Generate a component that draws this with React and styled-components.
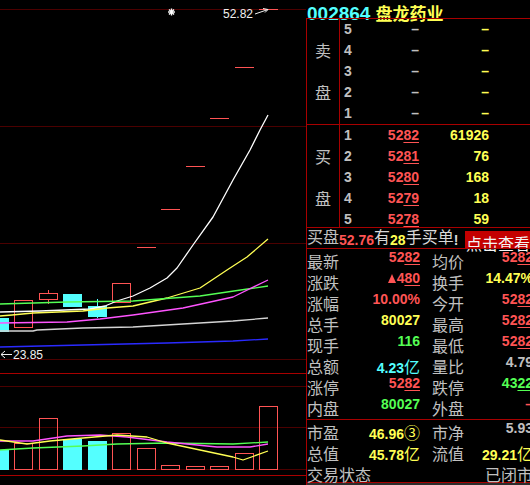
import React from "react";
import styled, { createGlobalStyle } from "styled-components";

const C = {
  red: "#ff5454",
  yellow: "#ffff54",
  cyan: "#54ffff",
  green: "#54ff54",
  gray: "#c0c0c0",
  white: "#ffffff",
  magenta: "#ff54ff",
  blue: "#2a2aff",
  line: "#a80000",
  dim: "#4c0000",
};

const Global = createGlobalStyle`
  html, body { margin: 0; padding: 0; background: #000; overflow: hidden; }
  #root { width: 530px; height: 485px; }
`;

const Screen = styled.div`
  width: 530px;
  height: 485px;
  display: flex;
  overflow: hidden;
  background: #000;
`;

const ChartArea = styled.div`
  width: 306px;
  height: 485px;
  flex-shrink: 0;
  svg { display: block; }
`;

const Panel = styled.div`
  width: 226px;
  flex-shrink: 0;
  display: flex;
  flex-direction: column;
`;

const Header = styled.div`
  height: 18px;
  display: flex;
  align-items: baseline;
  gap: 5px;
  padding-left: 1px;
  line-height: 18px;
  white-space: nowrap;
`;

const Code = styled.span`
  font: bold 19px "Liberation Sans", Arial, sans-serif;
  color: ${C.cyan};
`;

const Name = styled.span`
  font: bold 17px "Noto Sans CJK SC", sans-serif;
  color: ${C.yellow};
`;

const Body = styled.div`
  border-left: 1px solid ${C.line};
  display: flex;
  flex-direction: column;
`;

const Section = styled.div`
  border-top: 1px solid ${C.line};
  height: ${(p) => p.$h}px;
  flex-shrink: 0;
  ${(p) => (p.$last ? `border-bottom: 1px solid ${C.line};` : "")}
`;

const Book = styled(Section)`
  display: flex;
`;

const Side = styled.div`
  width: 32px;
  border-right: 1px solid ${C.line};
  display: grid;
  grid-template-rows: repeat(5, 21px);
  font: 16px "Noto Sans CJK SC", sans-serif;
  color: ${C.gray};
  line-height: 21px;
  text-align: center;
`;

const SideChar = styled.div`
  grid-row: ${(p) => p.$row};
`;

const Levels = styled.div`
  display: grid;
  grid-template-rows: repeat(5, 21px);
`;

const Level = styled.div`
  display: grid;
  grid-template-columns: 12px 63px 70px;
  padding-left: 4px;
  font: bold 14px "Liberation Sans", Arial, sans-serif;
  line-height: 21px;
  white-space: nowrap;
`;

const Cell = styled.span`
  color: ${(p) => p.$c || C.gray};
  text-align: ${(p) => (p.$right ? "right" : "left")};
`;

const Tail = styled.span`
  text-decoration: underline;
  text-underline-offset: 2px;
  text-decoration-thickness: 1px;
`;

const Notice = styled(Section)`
  display: flex;
  align-items: flex-end;
  white-space: nowrap;
  line-height: 20px;
`;

const Han = styled.span`
  font: 16px "Noto Sans CJK SC", sans-serif;
  color: ${(p) => p.$c || C.gray};
`;

const Num = styled.span`
  font: bold 14px "Liberation Sans", Arial, sans-serif;
  color: ${(p) => p.$c || C.gray};
`;

const LinkButton = styled.span`
  margin-left: auto;
  width: 66px;
  height: 17px;
  line-height: 17px;
  padding-left: 1px;
  background: #c40000;
  color: #f4f4f4;
  font: 16px "Noto Sans CJK SC", sans-serif;
`;

const StatGrid = styled(Section)`
  display: grid;
  grid-auto-rows: 21px;
  align-content: start;
`;

const StatRow = styled.div`
  display: grid;
  grid-template-columns: 40px 73px 52px 61px;
  line-height: 21px;
  white-space: nowrap;
`;

const Label = styled.span`
  font: 16px "Noto Sans CJK SC", sans-serif;
  color: ${C.gray};
  padding-left: ${(p) => (p.$second ? 12 : 0)}px;
`;

const Value = styled.span`
  font: bold 14px "Liberation Sans", Arial, sans-serif;
  color: ${(p) => p.$c};
  text-align: right;
`;

const StatusRow = styled.div`
  display: flex;
  justify-content: space-between;
  line-height: 21px;
  white-space: nowrap;
`;

const Up = styled.span`
  display: inline-block;
  width: 0;
  height: 0;
  border-left: 4px solid transparent;
  border-right: 4px solid transparent;
  border-bottom: 9px solid ${C.red};
  margin-right: 1px;
`;

const Footer = styled.div`
  height: 2px;
  background: #2c2c2c;
`;

const Price = ({ v }) => (
  <>
    {v.slice(0, -2)}
    <Tail>{v.slice(-2)}</Tail>
  </>
);

const DASH = "\u2013";

const sell = [5, 4, 3, 2, 1];
const buy = [
  [1, "5282", "61926"],
  [2, "5281", "76"],
  [3, "5280", "168"],
  [4, "5279", "18"],
  [5, "5278", "59"],
];

const stats1 = [
  ["最新", <Price v="5282" />, C.red, "均价", <Price v="5282" />, C.red],
  ["涨跌", <><Up /><Price v="480" /></>, C.red, "换手", "14.47%", C.yellow],
  ["涨幅", "10.00%", C.red, "今开", <Price v="5282" />, C.red],
  ["总手", "80027", C.yellow, "最高", <Price v="5282" />, C.red],
  ["现手", "116", C.green, "最低", <Price v="5282" />, C.red],
  ["总额", <>4.23<Han $c={C.cyan}>亿</Han></>, C.cyan, "量比", "4.79", C.gray],
  ["涨停", <Price v="5282" />, C.red, "跌停", <Price v="4322" />, C.green],
  ["内盘", "80027", C.green, "外盘", DASH, C.red],
];

const stats2 = [
  ["市盈", <>46.96<Han $c={C.yellow}>③</Han></>, C.yellow, "市净", "5.93", C.gray],
  ["总值", <>45.78<Han $c={C.yellow}>亿</Han></>, C.yellow, "流值", <>29.21<Han $c={C.yellow}>亿</Han></>, C.yellow],
];

/* ---------- chart drawing ---------- */
const STEP = 24.5;
const bodyLeft = (i) => Math.round(14 + STEP * (i - 1));

const candles = [
  { i: 0, k: "down", t: 318, b: 331 },
  { i: 1, k: "up", t: 300, b: 327 },
  { i: 2, k: "up", t: 293, b: 299, hi: 290, lo: 304 },
  { i: 3, k: "down", t: 294, b: 306 },
  { i: 4, k: "down", t: 306, b: 316, hi: 299, lo: 318 },
  { i: 5, k: "up", t: 283, b: 302 },
  { i: 6, k: "flat", t: 247 },
  { i: 7, k: "flat", t: 209 },
  { i: 8, k: "flat", t: 166 },
  { i: 9, k: "flat", t: 118 },
  { i: 10, k: "flat", t: 67 },
  { i: 11, k: "flat", t: 9 },
];

const vols = [
  { i: 0, k: "down", t: 450 },
  { i: 1, k: "up", t: 443 },
  { i: 2, k: "up", t: 418 },
  { i: 3, k: "down", t: 439 },
  { i: 4, k: "down", t: 441 },
  { i: 5, k: "up", t: 433 },
  { i: 6, k: "up", t: 448 },
  { i: 7, k: "up", t: 465 },
  { i: 8, k: "up", t: 466 },
  { i: 9, k: "up", t: 466 },
  { i: 10, k: "up", t: 453 },
  { i: 11, k: "up", t: 406 },
];

const maLines = [
  { c: C.white, p: [[0,312],[40,311],[90,309],[105,306],[117,301],[133,296],[150,288],[167,278],[177,268],[193,245],[213,217],[233,180],[250,150],[260,130],[268,115]] },
  { c: C.yellow, p: [[0,316],[12,315],[33,313],[83,311],[107,308],[133,306],[167,298],[200,288],[227,270],[247,257],[268,239]] },
  { c: C.green, p: [[0,304],[67,302],[133,301],[200,296],[268,286]] },
  { c: C.magenta, p: [[0,323],[67,322],[100,319],[133,315],[183,308],[233,297],[268,280]] },
  { c: "#d4d4d4", p: [[0,331],[33,331],[37,330],[83,328],[133,327],[183,324],[233,321],[268,318]] },
  { c: C.blue, p: [[0,347],[83,345],[167,343],[233,341],[268,339]] },
];

const volLines = [
  { c: C.green, p: [[0,450],[33,448],[83,446],[117,444],[167,443],[233,444],[268,442]] },
  { c: C.magenta, p: [[0,441],[33,441],[67,436],[100,435],[127,437],[167,442],[217,447],[250,447],[268,444]] },
  { c: C.yellow, p: [[0,440],[27,444],[50,441],[83,438],[117,435],[147,437],[167,443],[200,450],[233,457],[243,460],[268,451]] },
];

const grid = [
  [9, C.dim], [126, C.dim], [243, C.dim], [359, C.dim], [373, C.line],
  [386, C.dim], [427, C.dim], [469, C.dim], [475, C.line],
];

const pts = (p) => p.map(([x, y]) => `${x},${y}`).join(" ");

function Chart() {
  return (
    <svg width="306" height="485" viewBox="0 0 306 485">
      <g shapeRendering="crispEdges">
        {grid.map(([y, c]) => (
          <line key={y} x1="0" x2="306" y1={y + 0.5} y2={y + 0.5} stroke={c} strokeWidth="1" />
        ))}
        {candles.map((d) => {
          const x = bodyLeft(d.i);
          const cx = x + 9.5;
          if (d.k === "flat")
            return <line key={d.i} x1={x} x2={x + 19} y1={d.t + 0.5} y2={d.t + 0.5} stroke={C.red} />;
          const col = d.k === "up" ? C.red : C.cyan;
          return (
            <g key={d.i}>
              {d.hi && <line x1={cx} x2={cx} y1={d.hi} y2={d.t} stroke={col} />}
              {d.lo && <line x1={cx} x2={cx} y1={d.b} y2={d.lo} stroke={col} />}
              {d.k === "up" ? (
                <rect x={x + 0.5} y={d.t + 0.5} width="18" height={d.b - d.t} fill="none" stroke={col} />
              ) : (
                <rect x={x} y={d.t} width="19" height={d.b - d.t + 1} fill={col} />
              )}
            </g>
          );
        })}
        {vols.map((d) => {
          const x = bodyLeft(d.i);
          return d.k === "up" ? (
            <rect key={d.i} x={x + 0.5} y={d.t + 0.5} width="18" height={469 - d.t} fill="none" stroke={C.red} />
          ) : (
            <rect key={d.i} x={x} y={d.t} width="19" height={470 - d.t} fill={C.cyan} />
          );
        })}
      </g>
      <g fill="none" strokeWidth="1.3" strokeLinejoin="round">
        {maLines.map((l, k) => (
          <polyline key={k} points={pts(l.p)} stroke={l.c} />
        ))}
        {volLines.map((l, k) => (
          <polyline key={k} points={pts(l.p)} stroke={l.c} />
        ))}
      </g>
      <g stroke="#fff" strokeWidth="1.4">
        <line x1="168" x2="175" y1="12" y2="12" />
        <line x1="171.5" x2="171.5" y1="8.5" y2="15.5" />
        <line x1="169" x2="174" y1="9.5" y2="14.5" />
        <line x1="169" x2="174" y1="14.5" y2="9.5" />
      </g>
      <text x="223" y="17.5" fill="#f0f0f0" fontFamily="Liberation Sans, Arial, sans-serif" fontSize="12">52.82</text>
      <g stroke="#f0f0f0" strokeWidth="1" fill="none">
        <line x1="255" y1="14" x2="268" y2="9.5" />
        <polyline points="263,8.5 268,9.5 265,12.5" />
        <line x1="1" y1="354.5" x2="12" y2="354.5" />
        <polyline points="5,351 1,354.5 5,358" />
      </g>
      <text x="13" y="358.5" fill="#f0f0f0" fontFamily="Liberation Sans, Arial, sans-serif" fontSize="12">23.85</text>
    </svg>
  );
}

export default function App() {
  return (
    <>
      <Global />
      <Screen>
        <ChartArea>
          <Chart />
        </ChartArea>
        <Panel>
          <Header>
            <Code>002864</Code>
            <Name>盘龙药业</Name>
          </Header>
          <Body>
            <Book $h={105}>
              <Side>
                <SideChar $row={2}>卖</SideChar>
                <SideChar $row={4}>盘</SideChar>
              </Side>
              <Levels>
                {sell.map((n) => (
                  <Level key={n}>
                    <Cell>{n}</Cell>
                    <Cell $right>{DASH}</Cell>
                    <Cell $right $c={C.yellow}>{DASH}</Cell>
                  </Level>
                ))}
              </Levels>
            </Book>
            <Book $h={102}>
              <Side>
                <SideChar $row={2}>买</SideChar>
                <SideChar $row={4}>盘</SideChar>
              </Side>
              <Levels>
                {buy.map(([n, p, v]) => (
                  <Level key={n}>
                    <Cell>{n}</Cell>
                    <Cell $right $c={C.red}><Price v={p} /></Cell>
                    <Cell $right $c={C.yellow}>{v}</Cell>
                  </Level>
                ))}
              </Levels>
            </Book>
            <Notice $h={20}>
              <Han>买盘</Han>
              <Num $c={C.red}>52.76</Num>
              <Han $c="#d8d8d8">有</Han>
              <Num $c={C.yellow}>28</Num>
              <Han $c="#d8d8d8">手买单</Han>
              <Num $c="#d8d8d8">!</Num>
              <LinkButton>点击查看</LinkButton>
            </Notice>
            <StatGrid $h={170}>
              {stats1.map(([l1, v1, c1, l2, v2, c2]) => (
                <StatRow key={l1}>
                  <Label>{l1}</Label>
                  <Value $c={c1}>{v1}</Value>
                  <Label $second>{l2}</Label>
                  <Value $c={c2}>{v2}</Value>
                </StatRow>
              ))}
            </StatGrid>
            <StatGrid $h={62} $last>
              {stats2.map(([l1, v1, c1, l2, v2, c2]) => (
                <StatRow key={l1}>
                  <Label>{l1}</Label>
                  <Value $c={c1}>{v1}</Value>
                  <Label $second>{l2}</Label>
                  <Value $c={c2}>{v2}</Value>
                </StatRow>
              ))}
              <StatusRow>
                <Label>交易状态</Label>
                <Han>已闭市</Han>
              </StatusRow>
            </StatGrid>
            <Footer />
          </Body>
        </Panel>
      </Screen>
    </>
  );
}
